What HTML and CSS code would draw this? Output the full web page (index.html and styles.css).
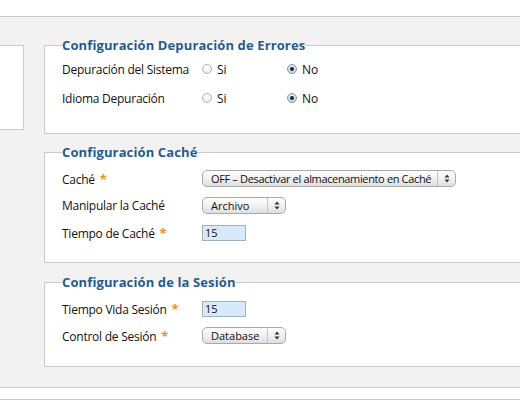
FILE: index.html
```html
<!DOCTYPE html>
<html lang="es">
<head>
  <meta charset="UTF-8">
  <title>Configuración del Sistema</title>
  <link rel="stylesheet" href="styles.css">
</head>
<body>
  <div class="topbar"></div>

  <div class="main">
    <div class="side"></div>

    <div class="forms">
      <fieldset class="panel panel-debug">
        <legend>Configuración Depuración de Errores</legend>
        <div class="row tall">
          <span class="label">Depuración del Sistema</span>
          <span class="choice"><span class="radio"></span>Si</span>
          <span class="choice"><span class="radio checked"></span>No</span>
        </div>
        <div class="row tall">
          <span class="label">Idioma Depuración</span>
          <span class="choice"><span class="radio"></span>Si</span>
          <span class="choice"><span class="radio checked"></span>No</span>
        </div>
      </fieldset>

      <fieldset class="panel panel-cache">
        <legend>Configuración Caché</legend>
        <div class="row">
          <span class="label">Caché <span class="req">*</span></span>
          <span class="select wide">
            <span class="value">OFF – Desactivar el almacenamiento en Caché</span>
            <span class="arrows"><svg width="6" height="9" viewBox="0 0 6 9"><path d="M3 0.5 L5.5 3.5 H0.5 Z M3 8.5 L5.5 5.5 H0.5 Z" fill="#333"/></svg></span>
          </span>
        </div>
        <div class="row">
          <span class="label">Manipular la Caché</span>
          <span class="select">
            <span class="value">Archivo</span>
            <span class="arrows"><svg width="6" height="9" viewBox="0 0 6 9"><path d="M3 0.5 L5.5 3.5 H0.5 Z M3 8.5 L5.5 5.5 H0.5 Z" fill="#333"/></svg></span>
          </span>
        </div>
        <div class="row">
          <span class="label">Tiempo de Caché <span class="req">*</span></span>
          <span class="input">15</span>
        </div>
      </fieldset>

      <fieldset class="panel panel-session">
        <legend>Configuración de la Sesión</legend>
        <div class="row">
          <span class="label">Tiempo Vida Sesión <span class="req">*</span></span>
          <span class="input">15</span>
        </div>
        <div class="row">
          <span class="label">Control de Sesión <span class="req">*</span></span>
          <span class="select">
            <span class="value">Database</span>
            <span class="arrows"><svg width="6" height="9" viewBox="0 0 6 9"><path d="M3 0.5 L5.5 3.5 H0.5 Z M3 8.5 L5.5 5.5 H0.5 Z" fill="#333"/></svg></span>
          </span>
        </div>
      </fieldset>
    </div>
  </div>

  <div class="bottombar"></div>
</body>
</html>
```

FILE: styles.css
```css
:root {
  --line: #cbcbcb;
  --panel-bg: #f2f2f2;
  --legend: #1f5b93;
  --req: #f0902a;
}

body {
  margin: 0;
  font-family: "Open Sans", "DejaVu Sans", sans-serif;
  font-size: 12px;
  color: #111;
  background: #fff;
  overflow: hidden;
}

.topbar {
  height: 16px;
}

.main {
  display: flex;
  gap: 20px;
  height: 370px;
  background: var(--panel-bg);
  border-top: 1px solid var(--line);
  border-bottom: 1px solid var(--line);
}

.side {
  flex-shrink: 0;
  width: 23px;
  height: 83px;
  margin-top: 28px;
  background: #fff;
  border: 1px solid var(--line);
  border-left: none;
}

.forms {
  display: flex;
  flex-direction: column;
  gap: 10px;
  padding-top: 20px;
}

.panel {
  width: 600px;
  margin: 0;
  padding: 5px 17px 16px;
  border: 1px solid var(--line);
  background: #fff;
}

.panel legend {
  padding: 0;
  font-size: 13px;
  font-weight: bold;
  line-height: 16px;
  letter-spacing: 0.12px;
  color: var(--legend);
}

.panel-debug {
  padding-top: 2px;
  padding-bottom: 20px;
}

.panel-session {
  margin-top: 1px;
  padding-bottom: 17px;
}

.row {
  display: flex;
  align-items: center;
  height: 27px;
}

.row.tall {
  height: 29px;
}

.label {
  width: 140px;
  flex-shrink: 0;
  letter-spacing: -0.25px;
}

.req {
  color: var(--req);
  font-weight: bold;
  font-size: 13px;
  margin-left: 2px;
}

.choice {
  display: flex;
  align-items: center;
  gap: 5px;
  width: 85px;
}

.radio {
  box-sizing: border-box;
  width: 10px;
  height: 10px;
  border-radius: 50%;
  border: 1px solid #b5b5b5;
  background: radial-gradient(circle at 50% 35%, #fff, #e4e4e4);
  position: relative;
  top: -1px;
}

.radio.checked {
  border-color: #7f96ae;
  background: radial-gradient(circle at 50% 35%, #eef4fb, #b7cbe0);
}

.radio.checked::after {
  content: "";
  position: absolute;
  left: 2px;
  top: 2px;
  width: 4px;
  height: 4px;
  border-radius: 50%;
  background: #222;
}

.select {
  box-sizing: border-box;
  display: flex;
  width: 84px;
  height: 17px;
  border: 1px solid #a9a9a9;
  border-radius: 5px;
  background: linear-gradient(#ffffff, #f1f1f1 50%, #dedede);
  font-size: 11px;
  line-height: 15px;
}

.select.wide {
  width: 254px;
}

.select.wide .value {
  letter-spacing: -0.35px;
}

.select .value {
  flex: 1;
  padding-left: 8px;
  white-space: nowrap;
  overflow: hidden;
}

.select .arrows {
  display: flex;
  align-items: center;
  justify-content: center;
  width: 17px;
  border-left: 1px solid #c6c6c6;
}

.input {
  box-sizing: border-box;
  width: 44px;
  height: 16px;
  padding-left: 2px;
  border: 1px solid #a6b0ba;
  background: #d6eafc;
  font-size: 11px;
  line-height: 14px;
}

.bottombar {
  height: 11px;
  border-bottom: 1px solid var(--line);
}
```
